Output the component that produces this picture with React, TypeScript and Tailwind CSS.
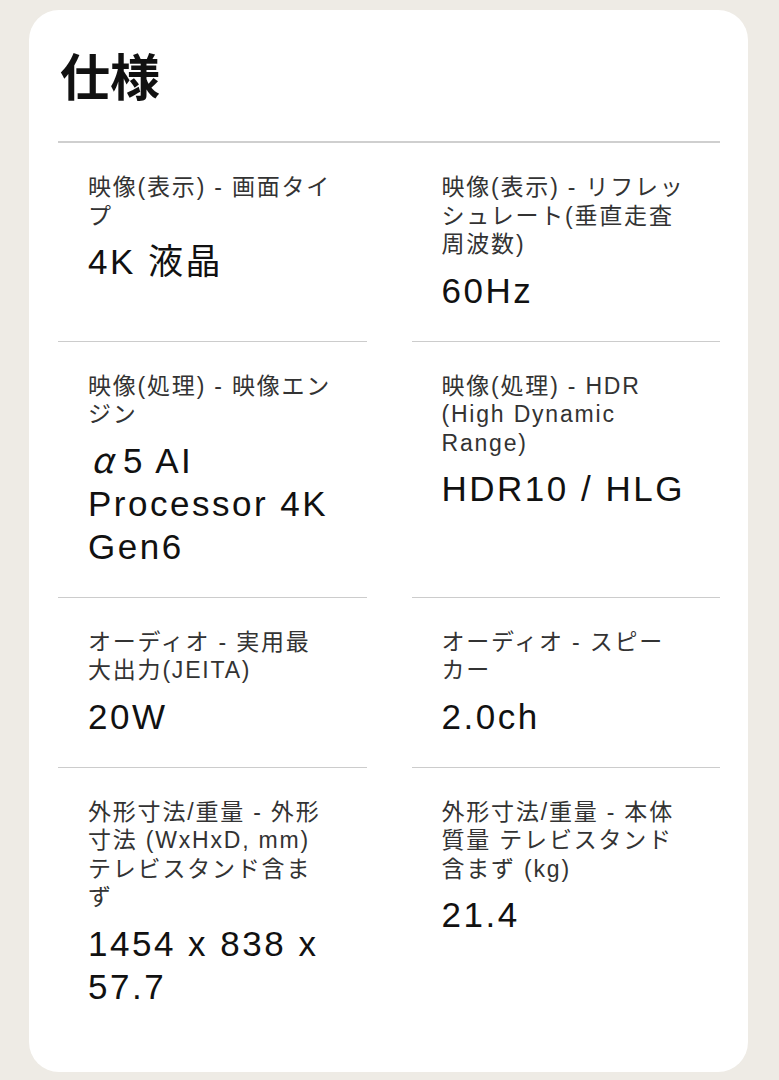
import React from "react";

type Spec = { label: string[]; value: React.ReactNode[] };

const specs: Spec[] = [
  { label: ["映像(表示) - 画面タイ", "プ"], value: ["4K 液晶"] },
  { label: ["映像(表示) - リフレッ", "シュレート(垂直走査", "周波数)"], value: ["60Hz"] },
  {
    label: ["映像(処理) - 映像エン", "ジン"],
    value: [
      <span key="a">
        <span className="inline-block w-[35px] pl-[3px] italic font-['Noto_Sans_CJK_JP'] leading-none align-baseline">α</span>5 AI
      </span>,
      "Processor 4K",
      "Gen6",
    ],
  },
  { label: ["映像(処理) - HDR", "(High Dynamic", "Range)"], value: ["HDR10 / HLG"] },
  { label: ["オーディオ - 実用最", "大出力(JEITA)"], value: ["20W"] },
  { label: ["オーディオ - スピー", "カー"], value: ["2.0ch"] },
  {
    label: ["外形寸法/重量 - 外形", "寸法 (WxHxD, mm)", "テレビスタンド含ま", "ず"],
    value: ["1454 x 838 x", "57.7"],
  },
  { label: ["外形寸法/重量 - 本体", "質量 テレビスタンド", "含まず (kg)"], value: ["21.4"] },
];

export default function App() {
  return (
    <div
      className="min-h-screen bg-[#eeebe5] pt-[10px] pb-[8px]"
      style={{ fontFamily: '"Liberation Sans", "Noto Sans CJK JP", sans-serif' }}
    >
      <div className="ml-[29px] w-[719px] rounded-[30px] bg-white pl-[29px] pr-[28px] pt-[39px] pb-[35px]">
        <h1 className="h-[94px] border-b-2 border-[#cfcfcf] pl-[2px] text-[50px] font-bold leading-[50px] text-[#111] font-['Noto_Sans_CJK_JP']">
          仕様
        </h1>
        <div className="grid grid-cols-2 gap-x-[45px]">
          {specs.map((s, i) => (
            <div
              key={i}
              className={`px-[30px] pt-[30px] pb-[29px] ${i >= 2 ? "border-t border-[#cccccc]" : ""}`}
            >
              <div className="text-[23px] tracking-[1.8px] text-[#333]">
                {s.label.map((l, j) => (
                  <div key={j} className="h-[28.5px] whitespace-nowrap leading-[28.5px] overflow-visible">
                    {l}
                  </div>
                ))}
              </div>
              <div className="mt-[10px] text-[35px] tracking-[2.5px] text-[#111]">
                {s.value.map((v, j) => (
                  <div key={j} className="h-[43px] whitespace-nowrap leading-[43px] overflow-visible">
                    {v}
                  </div>
                ))}
              </div>
            </div>
          ))}
        </div>
      </div>
    </div>
  );
}
